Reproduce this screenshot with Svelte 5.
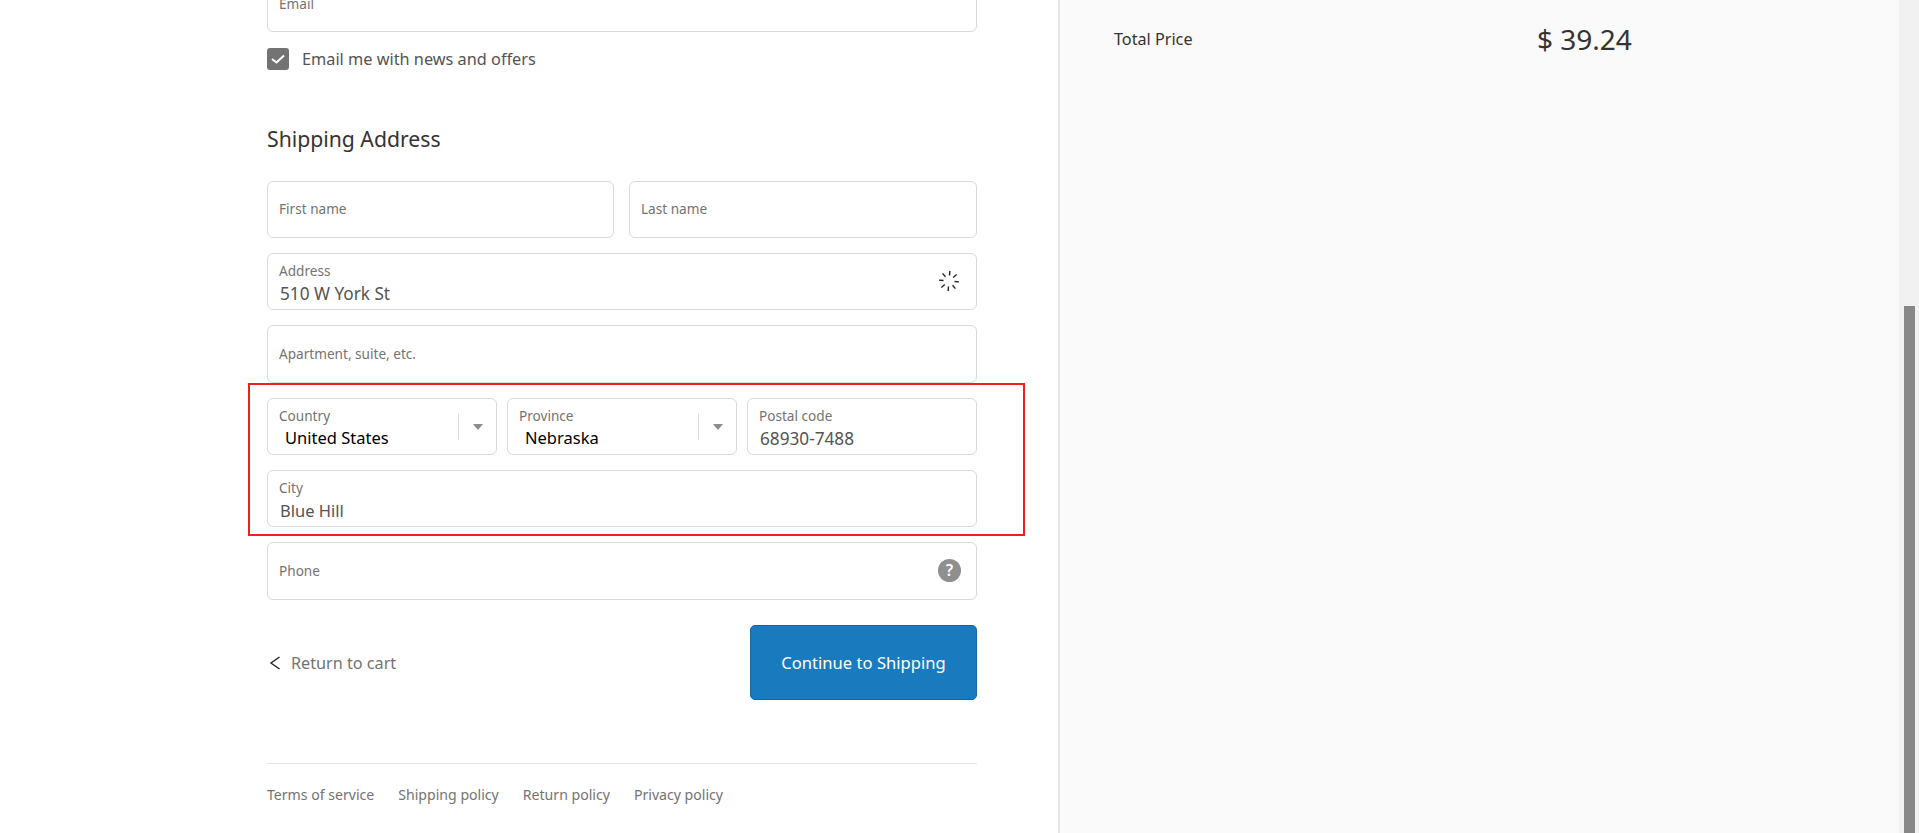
<script lang="ts">
    const policies = ["Terms of service", "Shipping policy", "Return policy", "Privacy policy"];
    const ticks = [0, 45, 90, 135, 180, 225, 270, 315];
</script>

<div class="page">
    <main class="checkout">
        <div class="column">
            <div class="field email"><span class="label">Email</span></div>

            <div class="check-row">
                <span class="checkbox">
                    <svg viewBox="0 0 22 22" width="22" height="22" aria-hidden="true">
                        <path d="M5 11l4.5 3.5L17 7.5" fill="none" stroke="#fff" stroke-width="2" />
                    </svg>
                </span>
                <span>Email me with news and offers</span>
            </div>

            <h2>Shipping Address</h2>

            <div class="rows">
                <div class="row two">
                    <div class="field placeholder"><span class="label">First name</span></div>
                    <div class="field placeholder"><span class="label">Last name</span></div>
                </div>

                <div class="field">
                    <span class="label">Address</span>
                    <span class="value numeric">510 W York St</span>
                    <svg class="field-icon" viewBox="0 0 24 24" width="24" height="24" aria-hidden="true">
                        {#each ticks as angle}
                            <line x1="12" y1="2" x2="12" y2="6.5" stroke="#222" stroke-width="1.4" transform="rotate({angle + 5} 12 12)" />
                        {/each}
                    </svg>
                </div>

                <div class="field placeholder"><span class="label">Apartment, suite, etc.</span></div>

                <div class="row three">
                    <div class="field select">
                        <span class="label">Country</span>
                        <span class="value picked">United States</span>
                        <span class="select-end"><span class="arrow"></span></span>
                    </div>
                    <div class="field select">
                        <span class="label">Province</span>
                        <span class="value picked">Nebraska</span>
                        <span class="select-end"><span class="arrow"></span></span>
                    </div>
                    <div class="field">
                        <span class="label">Postal code</span>
                        <span class="value numeric">68930-7488</span>
                    </div>
                </div>

                <div class="field">
                    <span class="label">City</span>
                    <span class="value">Blue Hill</span>
                </div>

                <div class="field placeholder">
                    <span class="label">Phone</span>
                    <span class="help">?</span>
                </div>
            </div>

            <div class="actions">
                <a class="back" href="#cart">
                    <svg viewBox="0 0 12 14" width="12" height="14" aria-hidden="true">
                        <path d="M11.5 1L3 7l8.5 6" fill="none" stroke="#222" stroke-width="1.4" />
                    </svg>
                    Return to cart
                </a>
                <button type="button">Continue to Shipping</button>
            </div>

            <footer>
                {#each policies as policy}
                    <a href="#policy">{policy}</a>
                {/each}
            </footer>

            <div class="highlight"></div>
        </div>
    </main>

    <aside class="summary">
        <span class="total-label">Total Price</span>
        <span class="total-value">$ 39.24</span>
    </aside>

    <div class="scrollbar"><div class="thumb"></div></div>
</div>

<style>
    :global(body) {
        margin: 0;
        overflow: hidden;
        background: #fff;
    }

    .page {
        display: grid;
        grid-template-columns: 1058px 1fr 20px;
        height: 833px;
        overflow: hidden;
        font-family: "Noto Sans", "Open Sans", sans-serif;
        color: #545454;
    }

    .checkout {
        padding-left: 267px;
    }

    .column {
        position: relative;
        width: 710px;
    }

    .field {
        position: relative;
        box-sizing: border-box;
        height: 57.33px;
        border: 1px solid #d9d9d9;
        border-radius: 6px;
        background: #fff;
        padding: 8px 11px 0;
        display: flex;
        flex-direction: column;
    }

    .email {
        margin-top: -25px;
        padding-top: 19px;
    }

    .label {
        font-size: 13.6px;
        line-height: 18px;
        color: #737373;
    }

    .placeholder {
        justify-content: center;
        padding-top: 0;
    }

    .value {
        margin-top: 3px;
        font-size: 16.5px;
        line-height: 22px;
        color: #545454;
        padding-left: 1px;
    }

    .numeric {
        font-size: 17.2px;
    }

    .picked {
        margin-top: 2px;
        color: #000;
        padding-left: 6px;
    }

    .check-row {
        display: flex;
        align-items: center;
        gap: 13px;
        margin-top: 16px;
        height: 22px;
        font-size: 16.3px;
    }

    .checkbox {
        width: 22px;
        height: 22px;
        border-radius: 3px;
        background: #737373;
    }

    .checkbox svg {
        display: block;
    }

    h2 {
        margin: 55px 0 0;
        font-size: 21.2px;
        line-height: 28px;
        font-weight: 400;
        color: #333;
    }

    .rows {
        display: flex;
        flex-direction: column;
        gap: 15px;
        margin-top: 27.5px;
    }

    .row {
        display: grid;
    }

    .two {
        grid-template-columns: 347px 348px;
        gap: 15px;
    }

    .three {
        grid-template-columns: 230px 230px 230px;
        gap: 10px;
    }

    .select-end {
        position: absolute;
        top: 15px;
        right: 0;
        width: 37px;
        height: 26px;
        border-left: 1px solid #d9d9d9;
        display: flex;
        align-items: center;
        justify-content: center;
    }

    .arrow {
        width: 0;
        height: 0;
        border-left: 5px solid transparent;
        border-right: 5px solid transparent;
        border-top: 6px solid #8c8c8c;
    }

    .field-icon {
        position: absolute;
        top: 15px;
        right: 15px;
    }

    .help {
        position: absolute;
        top: 16px;
        right: 15px;
        width: 23px;
        height: 23px;
        border-radius: 50%;
        background: #8f8f8f;
        color: #fff;
        font-size: 16px;
        font-weight: 600;
        line-height: 23px;
        text-align: center;
    }

    .actions {
        display: flex;
        justify-content: space-between;
        align-items: center;
        margin-top: 25px;
    }

    .back {
        display: flex;
        align-items: center;
        gap: 11px;
        padding-left: 1px;
        margin-top: 2px;
        font-size: 16.2px;
        color: #737373;
        text-decoration: none;
    }

    button {
        width: 227px;
        height: 75px;
        border: 1px solid #1667a0;
        border-radius: 5px;
        background: #197bbd;
        color: #fff;
        font: inherit;
        font-size: 16.6px;
    }

    footer {
        display: flex;
        gap: 24px;
        margin-top: 63.5px;
        padding-top: 20.5px;
        border-top: 1px solid #e6e6e6;
    }

    footer a {
        font-size: 14.1px;
        line-height: 20px;
        color: #737373;
        text-decoration: none;
    }

    .highlight {
        position: absolute;
        left: -19px;
        top: 408px;
        width: 773px;
        height: 149px;
        border: 2px solid #f01e1e;
        pointer-events: none;
    }

    .summary {
        background: #fafafa;
        border-left: 2px solid #e6e6e6;
        padding: 24px 0 0 54px;
        display: grid;
        grid-template-columns: 423px auto;
        justify-content: start;
        align-items: start;
    }

    .total-label {
        font-size: 16.2px;
        line-height: 30px;
        color: #333;
    }

    .total-value {
        font-size: 28px;
        line-height: 30px;
        color: #333;
    }

    .scrollbar {
        background: #f1f1f1;
        padding: 306px 4px 0 5px;
    }

    .thumb {
        height: 100%;
        background: #878787;
    }
</style>
